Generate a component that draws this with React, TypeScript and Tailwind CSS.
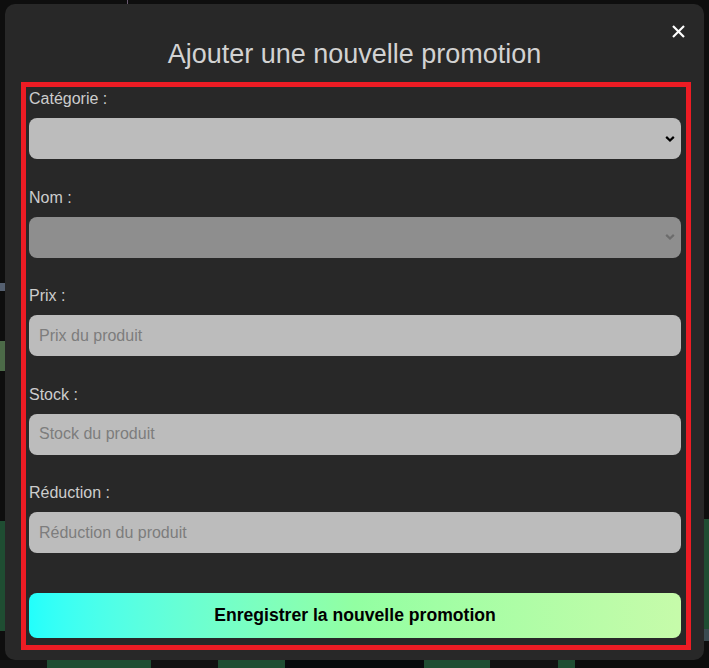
import { useState } from "react";

const fields = [
  { key: "prix", label: "Prix :", placeholder: "Prix du produit" },
  { key: "stock", label: "Stock :", placeholder: "Stock du produit" },
  { key: "reduction", label: "Réduction :", placeholder: "Réduction du produit" },
];

function Chevron({ color }: { color: string }) {
  return (
    <svg
      width="10"
      height="7"
      viewBox="0 0 10 7"
      className="pointer-events-none absolute right-[6px] top-1/2 -translate-y-1/2"
    >
      <polyline points="1.2,1.4 5,5 8.8,1.4" fill="none" stroke={color} strokeWidth="2.2" />
    </svg>
  );
}

export default function App() {
  const [values, setValues] = useState<Record<string, string>>({});

  return (
    <div className="relative h-[668px] w-full overflow-hidden bg-[#0e0e0e] font-['Liberation_Sans',Arial,sans-serif]">
      {/* Page behind the modal */}
      <div className="flex h-full flex-col">
        <div className="ml-[127px] h-[4px] w-px bg-[#6a5a70]" />
        <div className="flex flex-1">
          <div className="flex w-[5px] flex-col">
            <div className="h-[279px]" />
            <div className="h-[8px] bg-[#556070]" />
            <div className="h-[50px]" />
            <div className="h-[30px] bg-[#4c6a48]" />
            <div className="h-[150px]" />
            <div className="h-[110px] bg-[#1f4d32]" />
          </div>
          <div className="flex-1" />
          <div className="flex w-[5px] flex-col">
            <div className="h-[515px]" />
            <div className="h-[110px] bg-[#1f4d32]" />
            <div className="h-[12px] bg-[#3a4a50]" />
          </div>
        </div>
        <div className="flex h-[8px]">
          <div className="w-[47px] bg-[#141414]" />
          <div className="w-[104px] bg-[#1f4d32]" />
          <div className="w-[67px] bg-[#111111]" />
          <div className="w-[67px] bg-[#1f4d32]" />
          <div className="w-[139px] bg-[#070a0c]" />
          <div className="w-[66px] bg-[#1f4d32]" />
          <div className="w-[68px] bg-[#121212]" />
          <div className="w-[17px] bg-[#1f4d32]" />
          <div className="flex-1 bg-[#0c0c0c]" />
        </div>
      </div>

      {/* Modal */}
      <div className="absolute left-[5px] top-[4px] h-[656px] w-[699px] rounded-[10px] bg-[#282828]">
        <button
          type="button"
          aria-label="Fermer"
          className="absolute left-[666px] top-[20px] flex h-[14px] w-[14px] items-center justify-center"
        >
          <svg width="13" height="13" viewBox="0 0 13 13">
            <line x1="1" y1="1" x2="12" y2="12" stroke="#ffffff" strokeWidth="2.2" />
            <line x1="12" y1="1" x2="1" y2="12" stroke="#ffffff" strokeWidth="2.2" />
          </svg>
        </button>

        <h2 className="pt-[35px] text-center text-[27px] font-normal leading-[31px] text-[#d2d2d2]">
          Ajouter une nouvelle promotion
        </h2>

        <form
          onSubmit={(e) => e.preventDefault()}
          className="ml-[16px] mt-[12px] flex w-[670px] flex-col border-[5px] border-[#ed1c24] pb-[7px] pl-[3px] pr-[5px] pt-[3px]"
        >
          <div className="flex flex-col gap-[29.5px]">
            <div className="flex flex-col">
              <label className="text-[16px] leading-[18px] text-[#cdcdcd]">Catégorie :</label>
              <div className="relative mt-[10px]">
                <select className="h-[41px] w-full appearance-none rounded-[8px] bg-[#bcbcbc] px-[10px] text-[16px] text-black outline-none">
                  <option value="" />
                </select>
                <Chevron color="#000000" />
              </div>
            </div>

            <div className="flex flex-col">
              <label className="text-[16px] leading-[18px] text-[#cdcdcd]">Nom :</label>
              <div className="relative mt-[10px]">
                <select
                  disabled
                  className="h-[41px] w-full appearance-none rounded-[8px] bg-[#8e8e8e] px-[10px] text-[16px] outline-none"
                >
                  <option value="" />
                </select>
                <Chevron color="#6c6c6c" />
              </div>
            </div>

            {fields.map((f) => (
              <div key={f.key} className="flex flex-col">
                <label className="text-[16px] leading-[18px] text-[#cdcdcd]">{f.label}</label>
                <input
                  type="text"
                  value={values[f.key] ?? ""}
                  onChange={(e) => setValues((prev) => ({ ...prev, [f.key]: e.target.value }))}
                  placeholder={f.placeholder}
                  className="mt-[10px] h-[41px] w-full rounded-[8px] bg-[#bcbcbc] px-[10px] text-[16px] text-black outline-none placeholder:text-[#7d7d7d]"
                />
              </div>
            ))}
          </div>

          <button
            type="submit"
            className="mt-[40px] h-[45px] w-full rounded-[8px] bg-gradient-to-r from-[#22fffc] via-[#92ffa2] to-[#c6fbaa] text-[17.6px] font-bold text-black"
          >
            Enregistrer la nouvelle promotion
          </button>
        </form>
      </div>
    </div>
  );
}
